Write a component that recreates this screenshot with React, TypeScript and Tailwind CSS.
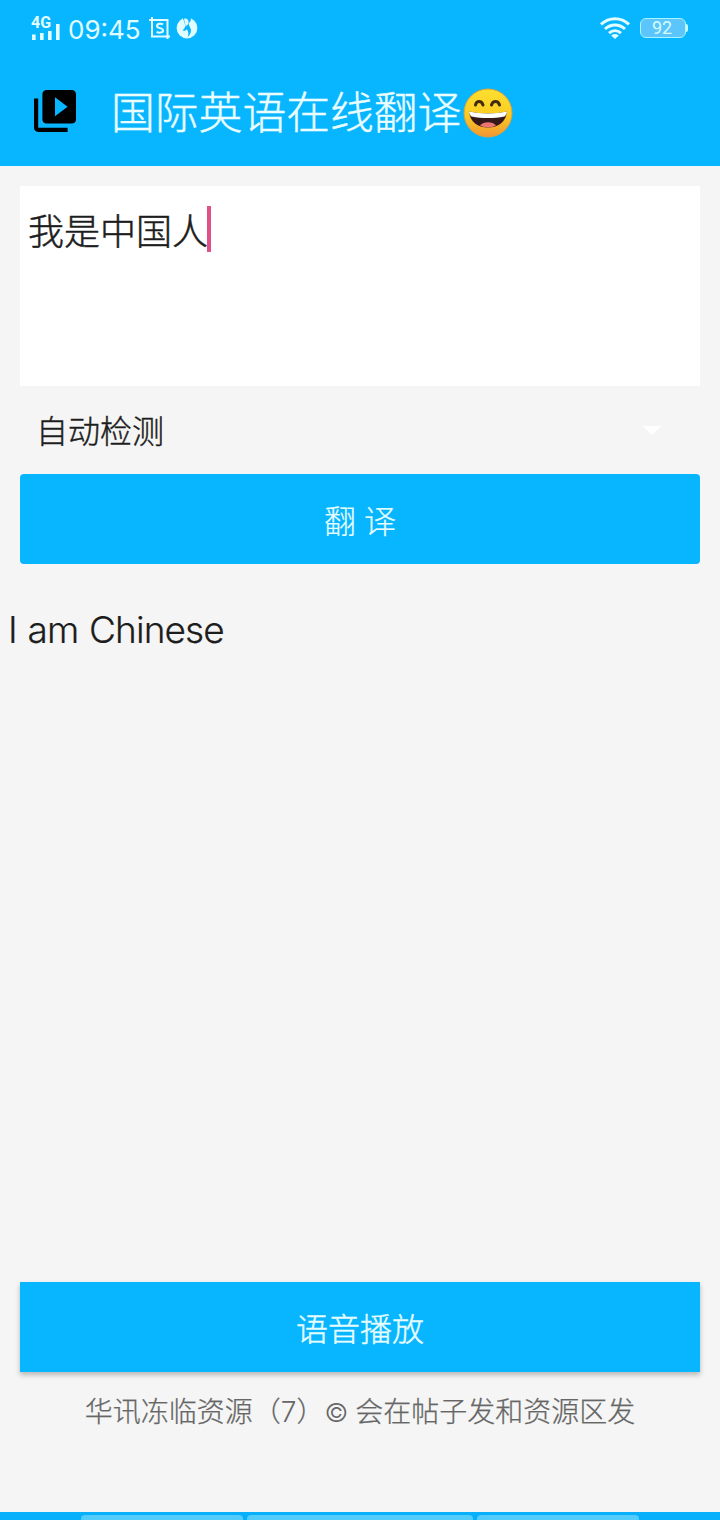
import type { ReactNode } from 'react'

function SignalIcon() {
  return (
    <div className="w-[30px]">
      <div className="h-3.5 text-[16px] leading-[14px] font-bold">4G</div>
      <svg className="-mt-[7px] block" width="30" height="17" viewBox="0 0 30 17" fill="currentColor">
        <rect x="1" y="11.5" width="3.6" height="5.5" />
        <rect x="9" y="10" width="3.6" height="7" />
        <rect x="17" y="8" width="3.6" height="9" />
        <rect x="25" y="1" width="3.6" height="16" />
      </svg>
    </div>
  )
}

function ScreenshotIcon() {
  return (
    <svg width="22" height="23" viewBox="0 0 22 23" fill="none" stroke="currentColor" strokeWidth="2">
      <path d="M0 3H18.5V22M3 0V19.5H21" />
      <path d="M14 7.6C12.6 6.4 8 6.3 8 9C8 11.8 14 10.4 14 13.4C14 16.2 9.2 16 7.7 14.7" />
    </svg>
  )
}

function FlameIcon() {
  return (
    <svg width="22" height="22" viewBox="0 0 22 22">
      <circle cx="11" cy="11" r="10.4" fill="currentColor" />
      <path d="M6.5 0H15.5L14.5 4L12.6 6.4C13 9.5 15 10.6 15 13.6C15 16 14 18 11.6 20C12.8 17.2 12.6 14.4 10.8 12.2C9.8 13.6 8.4 14 6.4 13.6C8.4 11.6 9.8 9.8 9 7.2Z" fill="#08b5ff" />
      <path d="M8.4 1.2C11.4 1.4 13 3 12.4 6.2C11.8 8 10.6 8.8 9.4 9.6C10 6.6 7.6 4.6 8.4 1.2Z" fill="currentColor" />
    </svg>
  )
}

function WifiIcon() {
  return (
    <svg width="30" height="22" viewBox="0 0 30 22" fill="none" stroke="currentColor" strokeWidth="2.9">
      <path d="M1 7.4C9 -.2 21 -.2 29 7.4" />
      <path d="M5 12C10.8 6.6 19.2 6.6 25 12" />
      <path d="M9 16.2C12.6 13 17.4 13 21 16.2" />
      <path d="M11.2 18.4Q15 15.6 18.8 18.4L15 22Z" fill="currentColor" stroke="none" />
    </svg>
  )
}

function Battery({ level }: { level: number }) {
  return (
    <div className="flex items-center">
      <div className="flex h-5 w-[46px] items-center justify-center rounded-[6px] border-[1.5px] border-[#a9f5ff] bg-[#5cc5fb] pr-0.5 text-[18px] leading-none text-[#d5fcff]">
        {level}
      </div>
      <div className="h-2 w-[2px] rounded-r bg-[#c8faff]" />
    </div>
  )
}

function VideoLibraryIcon() {
  return (
    <svg width="42" height="42" viewBox="2 2 20 20" fill="#000">
      <path d="M4 6H2v14c0 1.1.9 2 2 2h14v-2H4V6z" />
      <path d="M20 2H8c-1.1 0-2 .9-2 2v12c0 1.1.9 2 2 2h12c1.1 0 2-.9 2-2V4c0-1.1-.9-2-2-2zm-8 12.5v-9l6 4.5-6 4.5z" />
    </svg>
  )
}

function GrinEmoji() {
  return (
    <svg className="-mt-0.5 ml-0.5" width="50" height="50" viewBox="0 0 50 50">
      <defs>
        <linearGradient id="face" x1="0" y1="0" x2="0" y2="1">
          <stop offset="0" stopColor="#fde030" />
          <stop offset="0.55" stopColor="#fbcb22" />
          <stop offset="1" stopColor="#f19534" />
        </linearGradient>
      </defs>
      <circle cx="25" cy="25" r="24" fill="url(#face)" stroke="#dfa03a" strokeWidth="1" />
      <path d="M12.5 17C13.5 12.4 18.5 12.4 20 17M28.500 17C30 12.400 35 12.400 36.500 17" fill="none" stroke="#422b0d" strokeWidth="3" strokeLinecap="round" />
      <path d="M6 23.500C18 26 32 26 44 23.500C43 34 35 39.500 25 39.500C15 39.500 7 34 6 23.500Z" fill="#35181a" />
      <path d="M6 23.500C18 26 32 26 44 23.500C43.800 25.500 43 27.500 41.500 28.500C31 30.500 19 30.500 8.500 28.500C7 27.500 6.200 25.500 6 23.500Z" fill="#fff" />
      <path d="M17 37.500C20 33 30 33 33 37.500C28 40 22 40 17 37.500Z" fill="#ed7770" />
    </svg>
  )
}

function StatusBar() {
  return (
    <div className="flex h-14 items-center justify-between pr-8 pl-[31px] text-[#e2fdff]">
      <div className="flex items-center">
        <SignalIcon />
        <span className="mt-[3px] ml-[7px] w-[74px] font-['Inter'] text-[26px] leading-8 whitespace-nowrap">09:45</span>
        <div className="ml-[7px]">
          <ScreenshotIcon />
        </div>
        <div className="ml-[5px]">
          <FlameIcon />
        </div>
      </div>
      <div className="flex items-center gap-2.5">
        <WifiIcon />
        <Battery level={92} />
      </div>
    </div>
  )
}

function ActionButton({ children, className }: { children: ReactNode; className: string }) {
  return (
    <button className={`mx-5 flex h-[90px] shrink-0 items-center justify-center bg-[#08b5ff] pt-1.5 text-[32px] font-light text-[#e6fdff] ${className}`}>
      {children}
    </button>
  )
}

export default function App() {
  return (
    <div lang="zh-CN" className="flex h-[1520px] w-[720px] flex-col overflow-hidden bg-[#f5f5f5] font-['Roboto','Noto_Sans_CJK_SC',sans-serif] text-[#1d1d1d]">
      <header className="h-[166px] shrink-0 bg-[#08b5ff]">
        <StatusBar />
        <div className="flex h-[110px] items-center pl-[34px]">
          <VideoLibraryIcon />
          <h1 className="mt-1.5 ml-[35px] flex items-center text-[43.8px] leading-none font-light text-[#eafeff] [-webkit-text-stroke:0.4px]">
            <span className="pt-0.5">国际英语在线翻译</span>
            <GrinEmoji />
          </h1>
        </div>
      </header>

      {/* Source text */}
      <div className="mx-5 mt-5 flex h-[200px] shrink-0 items-start bg-white px-2 pt-5 text-[36px]">
        <span className="pt-0.5 leading-[50px] font-light [-webkit-text-stroke:0.5px]">我是中国人</span>
        <span className="-ml-px h-[46px] w-1 bg-[#e0518a]" />
      </div>

      {/* Language select */}
      <div className="mx-5 flex h-[88px] shrink-0 items-center justify-between pr-[39px] pl-4">
        <span className="pt-1 text-[32px] leading-none font-light [-webkit-text-stroke:0.4px]">自动检测</span>
        <svg width="18" height="9" viewBox="0 0 18 9" fill="#fff">
          <path d="M0 0H18L9 9Z" />
        </svg>
      </div>

      <ActionButton className="rounded [-webkit-text-stroke:0.2px]">翻 译</ActionButton>

      {/* Translation result */}
      <p className="mt-[41px] grow px-2 font-['Inter'] text-[37px] leading-[50px] font-light tracking-[-0.9px] [word-spacing:1.2px] [-webkit-text-stroke:0.2px]">I am Chinese</p>

      <ActionButton className="shadow-[0_3px_5px_rgba(0,0,0,0.25)] [-webkit-text-stroke:0.4px]">语音播放</ActionButton>

      <footer className="h-[140px] shrink-0 pt-5 text-center text-[28px] leading-10 font-light text-[#666] [-webkit-text-stroke:0.25px]">
        华讯冻临资源（<span className="font-['Inter'] [-webkit-text-stroke:0]">7</span>）<span className="font-['Inter'] text-[26px] [-webkit-text-stroke:0]">©</span> 会在帖子发和资源区发
      </footer>

      {/* Top edge of the keyboard */}
      <div className="flex h-2 shrink-0 justify-center gap-1 bg-[#08b0fb] pt-[3px]">
        <div className="w-[162px] rounded-t-sm bg-[#52ccfa]" />
        <div className="w-[226px] rounded-t-sm bg-[#52ccfa]" />
        <div className="w-[162px] rounded-t-sm bg-[#52ccfa]" />
      </div>
    </div>
  )
}
